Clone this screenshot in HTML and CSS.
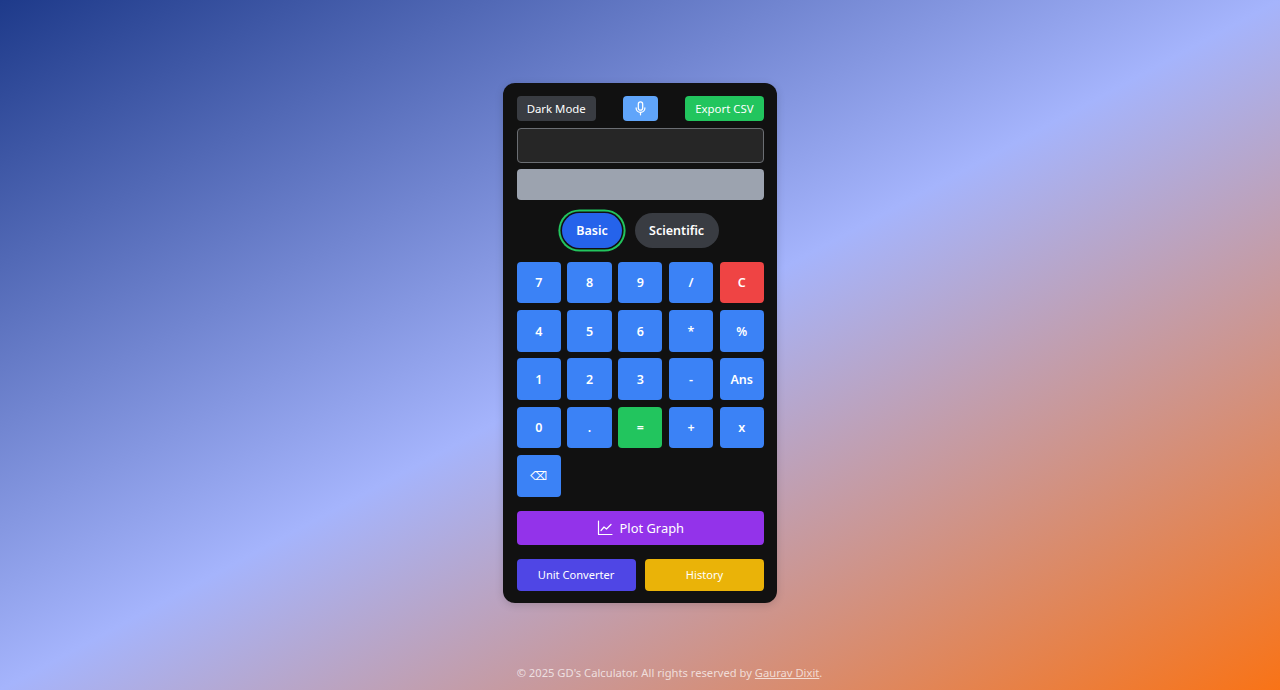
FILE: index.html
```html
<!DOCTYPE html>
<html lang="en">
<head>
    <meta charset="UTF-8">
    <meta name="viewport" content="width=device-width, initial-scale=1.0">
    <title>GD's Calculator</title>
    <link rel="stylesheet" href="styles.css">
</head>
<body>

<main class="page">
    <div class="calculator">
        <div class="toolbar">
            <button class="tool-btn btn-dark">Dark Mode</button>
            <button class="tool-btn btn-mic" aria-label="Voice input">
                <svg width="15" height="15" viewBox="0 0 24 24" fill="none" stroke="currentColor" stroke-width="2" stroke-linecap="round" stroke-linejoin="round">
                    <rect x="8.5" y="1.5" width="7" height="13" rx="3.5"/>
                    <path d="M5 11a7 7 0 0 0 14 0"/>
                    <path d="M12 18v4"/>
                </svg>
            </button>
            <button class="tool-btn btn-export">Export CSV</button>
        </div>

        <input class="display" type="text" aria-label="Expression">
        <div class="preview"></div>

        <div class="tabs">
            <button class="tab tab-active">Basic</button>
            <button class="tab">Scientific</button>
        </div>

        <div class="keys">
            <button class="key">7</button>
            <button class="key">8</button>
            <button class="key">9</button>
            <button class="key">/</button>
            <button class="key key-clear">C</button>
            <button class="key">4</button>
            <button class="key">5</button>
            <button class="key">6</button>
            <button class="key">*</button>
            <button class="key">%</button>
            <button class="key">1</button>
            <button class="key">2</button>
            <button class="key">3</button>
            <button class="key">-</button>
            <button class="key">Ans</button>
            <button class="key">0</button>
            <button class="key">.</button>
            <button class="key key-equals">=</button>
            <button class="key">+</button>
            <button class="key">x</button>
            <button class="key key-back">⌫</button>
        </div>

        <button class="plot-btn">
            <svg width="16" height="16" viewBox="0 0 16 16" fill="none" stroke="currentColor" stroke-width="1.2" stroke-linecap="round" stroke-linejoin="round">
                <path d="M1.5 1v13.5H15"/>
                <path d="M4 10.5l3-3.5 2.5 2L14 4.5"/>
            </svg>
            Plot Graph
        </button>

        <div class="bottom-row">
            <button class="bottom-btn btn-unit">Unit Converter</button>
            <button class="bottom-btn btn-history">History</button>
        </div>
    </div>
</main>

<footer class="footer">
    © 2025 GD's Calculator. All rights reserved by <a href="#">Gaurav Dixit</a>.
</footer>

</body>
</html>
```

FILE: styles.css
```css
* {
    box-sizing: border-box;
}

html, body {
    height: 100%;
}

body {
    margin: 0;
    display: flex;
    flex-direction: column;
    font-family: "Noto Sans", "Open Sans", sans-serif;
    background: linear-gradient(to bottom right, #1e3a8a, #a5b4fc, #f97316);
    overflow: hidden;
}

button {
    font-family: inherit;
    border: none;
    color: white;
    cursor: pointer;
}

.page {
    flex: 1;
    padding: 82.7px 0 0 0.6px;
    display: flex;
    justify-content: center;
    align-items: flex-start;
}

.calculator {
    width: 274px;
    height: 520.6px;
    padding: 13.3px 13.4px;
    background-color: #111111;
    border-radius: 12px;
    box-shadow: 0 2px 8px rgba(0, 0, 0, 0.15);
}

.toolbar {
    display: flex;
    justify-content: space-between;
    margin-bottom: 6.7px;
}

.tool-btn {
    height: 25px;
    padding: 1px 0 0;
    font-size: 11.4px;
    border-radius: 4px;
    display: flex;
    align-items: center;
    justify-content: center;
}

.btn-dark {
    width: 79px;
    background-color: #393c42;
}

.btn-mic {
    width: 35px;
    background-color: #60a5fa;
}

.btn-export {
    width: 79px;
    background-color: #22c55e;
}

.display {
    display: block;
    width: 100%;
    height: 35px;
    background-color: #262626;
    border: 1px solid #6b6e73;
    border-radius: 4px;
    margin-bottom: 6.6px;
}

.preview {
    height: 30.4px;
    background-color: #9ca3af;
    border-radius: 4px;
    margin-bottom: 13px;
}

.tabs {
    display: flex;
    justify-content: center;
    gap: 12.7px;
    margin-bottom: 13.4px;
}

.tab {
    width: 84px;
    height: 35.6px;
    padding: 1px 0 0;
    font-size: 12.5px;
    font-weight: 600;
    border-radius: 18px;
    background-color: #393c42;
}

.tab-active {
    width: 60px;
    background-color: #2563eb;
    box-shadow: 0 0 0 1.6px #111111, 0 0 0 3.6px #22c55e;
}

.keys {
    display: grid;
    grid-template-columns: repeat(5, 1fr);
    grid-auto-rows: 41.6px;
    gap: 6.75px 6.4px;
    margin-bottom: 14.2px;
}

.key {
    padding: 1px 0 0;
    font-size: 12.5px;
    font-weight: 600;
    border-radius: 4px;
    background-color: #3b82f6;
}

.key-clear {
    background-color: #ef4444;
}

.key-equals {
    background-color: #22c55e;
}

.key-back {
    font-family: "DejaVu Sans", sans-serif;
    font-size: 12px;
    font-weight: 400;
}

.plot-btn {
    width: 100%;
    height: 34.6px;
    margin-bottom: 13.4px;
    font-size: 12.9px;
    border-radius: 4px;
    background-color: #9333ea;
    display: flex;
    align-items: center;
    justify-content: center;
    gap: 7px;
}

.bottom-row {
    display: flex;
    gap: 9.6px;
}

.bottom-btn {
    flex: 1;
    height: 32px;
    padding: 0;
    font-size: 11.1px;
    border-radius: 4px;
}

.btn-unit {
    background-color: #4f46e5;
}

.btn-history {
    background-color: #eab308;
}

.footer {
    padding: 0 0 9px 59px;
    text-align: center;
    font-size: 11.2px;
    line-height: 17px;
    color: rgba(255, 255, 255, 0.7);
}

.footer a {
    color: inherit;
}
```
